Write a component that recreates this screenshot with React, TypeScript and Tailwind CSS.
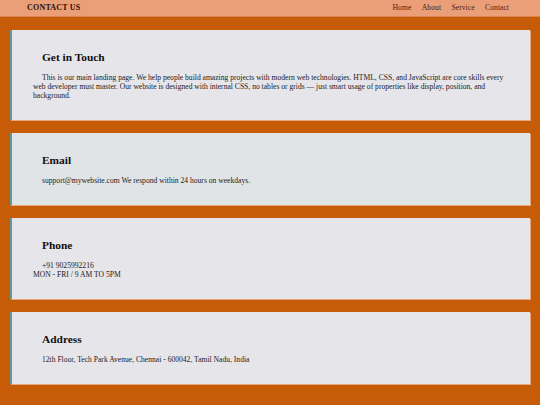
import React from "react";

const serif = { fontFamily: '"Liberation Serif", "Times New Roman", serif' };

function Box({ title, bg, children }: { title: string; bg: string; children: React.ReactNode }) {
  return (
    <section
      className={`mx-[10px] mt-[13px] border-l-[2px] border-[#5c9aa1] px-[21px] py-[20px] shadow-[1px_1px_0_#eba57c] ${bg}`}
    >
      <h2 className="indent-[9px] text-[11.4px] font-bold leading-[14px] text-[#111] mb-[9px]">{title}</h2>
      <div className="indent-[9px] text-[7.6px] leading-[9px] text-[#222]">{children}</div>
    </section>
  );
}

export default function App() {
  return (
    <div className="min-h-[405px] bg-[#c65c08] pb-[20px]" style={serif}>
      <header className="flex h-[17px] items-center justify-between border-b border-[#d9834f] bg-[#eb9f78] pl-[27px] pr-[31px]">
        <span className="text-[8px] font-bold tracking-[0.2px] text-[#2a1208]">CONTACT US</span>
        <nav className="flex gap-[10.5px] text-[7.7px] text-[#4a2414]">
          <span>Home</span>
          <span>About</span>
          <span>Service</span>
          <span>Contact</span>
        </nav>
      </header>
      <Box title="Get in Touch" bg="bg-[#e6e5ea]">
        <p>
          This is our main landing page. We help people build amazing projects with modern web technologies. HTML, CSS, and JavaScript are core skills every web developer must master. Our website is designed with internal CSS, no tables or grids — just smart usage of properties like display, position, and background.
        </p>
      </Box>
      <Box title="Email" bg="bg-[#e1e4e6]">
        <p>support@mywebsite.com We respond within 24 hours on weekdays.</p>
      </Box>
      <Box title="Phone" bg="bg-[#e6e5ea]">
        <p>
          +91 9025992216
          <br />
          MON - FRI / 9 AM TO 5PM
        </p>
      </Box>
      <Box title="Address" bg="bg-[#e6e5ea]">
        <p>12th Floor, Tech Park Avenue, Chennai - 600042, Tamil Nadu, India</p>
      </Box>
    </div>
  );
}
